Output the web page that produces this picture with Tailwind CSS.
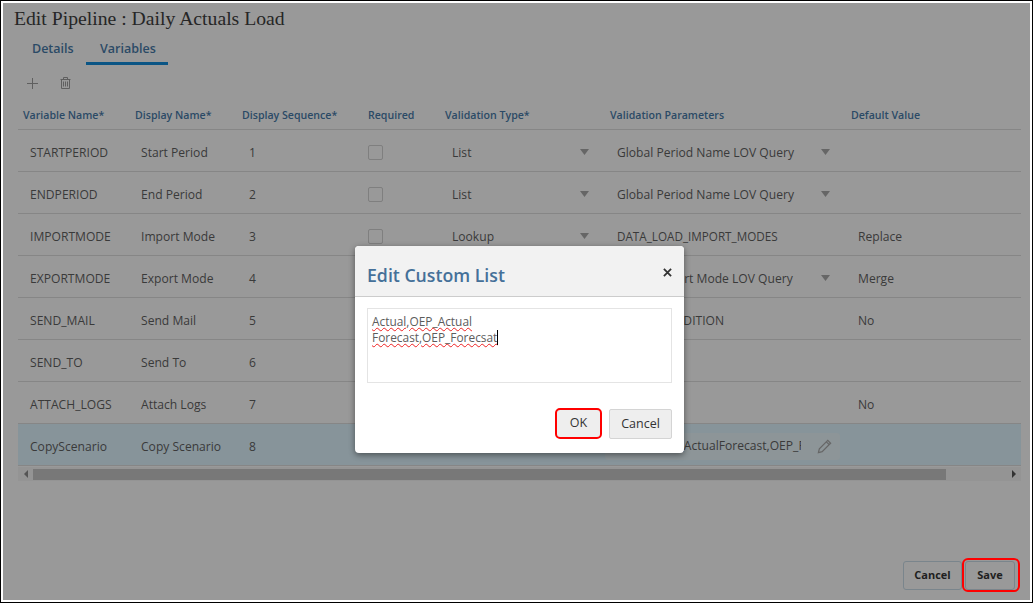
<!DOCTYPE html>
<html>
<head>
<meta charset="utf-8">
<script src="https://cdn.jsdelivr.net/npm/@tailwindcss/browser@4"></script>
</head>
<body class="w-[1033px] h-[603px] overflow-hidden bg-white font-['Open_Sans',sans-serif]">
<div class="relative w-[1033px] h-[603px] border border-black p-[2px]">
  <div class="flex flex-col h-full bg-[#999999] pl-[11px] pr-[9px]">
    <h1 class="font-['Liberation_Serif',serif] text-[#262626] text-[19.7px] leading-[24px] pt-[3px] h-[29px]">Edit Pipeline : Daily Actuals Load</h1>
    <div class="flex h-[33px] ml-[12px] text-[#2b4a66] text-[12.5px] font-semibold">
      <div class="w-[60px] pl-[6px] pt-[8px]">Details</div>
      <div class="w-[82px] pl-[14px] pt-[8px] border-b-[3px] border-[#0a5585]">Variables</div>
    </div>
    <div class="flex items-center gap-[22px] h-[36px] pl-[13px]">
      <svg class="w-[11px] h-[11px]" viewBox="0 0 11 11" fill="none" stroke="#5f5f5f" stroke-width="1"><path d="M5.5 0V11M0 5.5H11"/></svg>
      <svg class="w-[11px] h-[12px]" viewBox="0 0 11 12" fill="none" stroke="#5f5f5f" stroke-width="1"><path d="M0.5 2.5H10.5M3.5 2.5V0.5H7.5V2.5M1.5 2.5V11.5H9.5V2.5M3.5 4.5V9.5M5.5 4.5V9.5M7.5 4.5V9.5"/></svg>
    </div>
    <div class="ml-[4px] text-[12.1px] text-[#3a3a3a]">
      <div class="flex items-center h-[29px] pt-[2px] border-b border-[#868686] text-[#2b4a66] font-semibold text-[10.6px]">
        <div class="w-[112px] pl-[5px]">Variable Name*</div>
        <div class="w-[107px] pl-[5px]">Display Name*</div>
        <div class="w-[126px] pl-[5px]">Display Sequence*</div>
        <div class="w-[77px] pl-[5px]">Required</div>
        <div class="w-[165px] pl-[5px]">Validation Type*</div>
        <div class="w-[241px] pl-[5px]">Validation Parameters</div>
        <div class="flex-1 pl-[5px]">Default Value</div>
      </div>
      <div class="flex items-center h-[42px] pt-[5px] border-b border-[#868686]">
        <div class="w-[112px] pl-[12px]">STARTPERIOD</div><div class="w-[107px] pl-[11px]">Start Period</div><div class="w-[126px] pl-[12px]">1</div>
        <div class="w-[77px] pl-[5px]"><div class="w-[15px] h-[15px] -mt-[2px] border border-[#7f7f7f] rounded-[2px]"></div></div>
        <div class="w-[165px] pl-[12px] pr-[16px] flex justify-between items-center"><span>List</span><svg class="w-[9px] h-[6px] -mt-[2px]" viewBox="0 0 9 6"><path d="M0 0H9L4.5 6Z" fill="#666"/></svg></div>
        <div class="w-[241px] pl-[12px] flex items-center"><span class="w-[204px]">Global Period Name LOV Query</span><svg class="w-[9px] h-[6px] -mt-[2px]" viewBox="0 0 9 6"><path d="M0 0H9L4.5 6Z" fill="#666"/></svg></div>
      </div>
      <div class="flex items-center h-[42px] pt-[5px] border-b border-[#868686]">
        <div class="w-[112px] pl-[12px]">ENDPERIOD</div><div class="w-[107px] pl-[11px]">End Period</div><div class="w-[126px] pl-[12px]">2</div>
        <div class="w-[77px] pl-[5px]"><div class="w-[15px] h-[15px] -mt-[2px] border border-[#7f7f7f] rounded-[2px]"></div></div>
        <div class="w-[165px] pl-[12px] pr-[16px] flex justify-between items-center"><span>List</span><svg class="w-[9px] h-[6px] -mt-[2px]" viewBox="0 0 9 6"><path d="M0 0H9L4.5 6Z" fill="#666"/></svg></div>
        <div class="w-[241px] pl-[12px] flex items-center"><span class="w-[204px]">Global Period Name LOV Query</span><svg class="w-[9px] h-[6px] -mt-[2px]" viewBox="0 0 9 6"><path d="M0 0H9L4.5 6Z" fill="#666"/></svg></div>
      </div>
      <div class="flex items-center h-[42px] pt-[5px] border-b border-[#868686]">
        <div class="w-[112px] pl-[12px]">IMPORTMODE</div><div class="w-[107px] pl-[11px]">Import Mode</div><div class="w-[126px] pl-[12px]">3</div>
        <div class="w-[77px] pl-[5px]"><div class="w-[15px] h-[15px] -mt-[2px] border border-[#7f7f7f] rounded-[2px]"></div></div>
        <div class="w-[165px] pl-[12px] pr-[16px] flex justify-between items-center"><span>Lookup</span><svg class="w-[9px] h-[6px] -mt-[2px]" viewBox="0 0 9 6"><path d="M0 0H9L4.5 6Z" fill="#666"/></svg></div>
        <div class="w-[241px] pl-[12px] whitespace-nowrap text-[11.7px]">DATA_LOAD_IMPORT_MODES</div><div class="pl-[12px]">Replace</div>
      </div>
      <div class="flex items-center h-[42px] pt-[5px] border-b border-[#868686]">
        <div class="w-[112px] pl-[12px]">EXPORTMODE</div><div class="w-[107px] pl-[11px]">Export Mode</div><div class="w-[126px] pl-[12px]">4</div>
        <div class="w-[77px]"></div><div class="w-[165px]"></div>
        <div class="w-[241px] pl-[12px] flex items-center"><span class="w-[204px]">Global Export Mode LOV Query</span><svg class="w-[9px] h-[6px] -mt-[2px]" viewBox="0 0 9 6"><path d="M0 0H9L4.5 6Z" fill="#666"/></svg></div><div class="pl-[12px]">Merge</div>
      </div>
      <div class="flex items-center h-[42px] pt-[5px] border-b border-[#868686]">
        <div class="w-[112px] pl-[12px]">SEND_MAIL</div><div class="w-[107px] pl-[11px]">Send Mail</div><div class="w-[126px] pl-[12px]">5</div>
        <div class="w-[77px]"></div><div class="w-[165px]"></div>
        <div class="w-[241px] pl-[12px]">EMAIL_CONDITION</div><div class="pl-[12px]">No</div>
      </div>
      <div class="flex items-center h-[42px] pt-[5px] border-b border-[#868686]">
        <div class="w-[112px] pl-[12px]">SEND_TO</div><div class="w-[107px] pl-[11px]">Send To</div><div class="w-[126px] pl-[12px]">6</div>
      </div>
      <div class="flex items-center h-[42px] pt-[5px] border-b border-[#868686]">
        <div class="w-[112px] pl-[12px]">ATTACH_LOGS</div><div class="w-[107px] pl-[11px]">Attach Logs</div><div class="w-[126px] pl-[12px]">7</div>
        <div class="w-[77px]"></div><div class="w-[165px]"></div><div class="w-[241px]"></div><div class="pl-[12px]">No</div>
      </div>
      <div class="flex items-center h-[42px] pt-[3px] border-b border-[#868686] bg-[#87949a]">
        <div class="w-[112px] pl-[12px] pt-[2px]">CopyScenario</div><div class="w-[107px] pl-[11px] pt-[2px]">Copy Scenario</div><div class="w-[126px] pl-[12px] pt-[2px]">8</div>
        <div class="w-[77px]"></div><div class="w-[165px]"></div>
        <div class="w-[235px] h-[27px] pl-[12px] pt-[1px] flex items-center bg-[#8d9598] rounded-[3px]"><span class="w-[184px] overflow-hidden whitespace-nowrap">Actual,OEP_ActualForecast,OEP_Forecast</span><svg class="w-[15px] h-[15px] ml-[16px]" viewBox="0 0 16 16" fill="none" stroke="#666" stroke-width="1.3"><path d="M1.5 14.5L2.5 10.5L11.5 1.5L14.5 4.5L5.5 13.5ZM10 3L13 6"/></svg></div>
      </div>
      <div class="flex items-center h-[14px] mt-[1px] bg-[#949494]">
        <div class="w-[15px] flex justify-center"><div class="border-y-[4px] border-r-[4px] border-y-transparent border-r-[#555]"></div></div>
        <div class="w-[913px] h-[11px] bg-[#787878]"></div>
        <div class="flex-1 flex justify-end pr-[5px]"><div class="border-y-[4px] border-l-[4px] border-y-transparent border-l-[#333]"></div></div>
      </div>
    </div>
    <div class="flex justify-end gap-[3px] mt-auto mb-[10px] pr-[6px] text-[11px] font-bold text-[#1f1f1f]">
      <div class="w-[59px] h-[29px] flex items-center justify-center border border-[#7a858c] rounded-[3px]">Cancel</div>
      <div class="w-[50px] h-[29px] flex items-center justify-center border border-[#7a858c] rounded-[3px]">Save</div>
    </div>
  </div>
  <div class="absolute left-[961px] top-[557px] w-[58px] h-[34px] border-2 border-[#ff0000] rounded-[6px]"></div>
  <div class="absolute left-[354px] top-[245px] w-[329px] h-[207px] bg-white rounded-[4px] shadow-[0_2px_6px_rgba(0,0,0,0.45)] flex flex-col">
    <div class="flex items-center justify-between h-[51px] bg-[#f2f2f2] border-b border-[#cccccc] rounded-t-[4px] pl-[12px] pr-[12px]">
      <span class="text-[#457099] text-[17.7px] font-semibold pt-[8px]">Edit Custom List</span>
      <svg class="w-[9px] h-[9px] mt-[2px]" viewBox="0 0 10 10" stroke="#333" stroke-width="2"><path d="M1 1L9 9M9 1L1 9"/></svg>
    </div>
    <div class="mx-[12px] mt-[11px] h-[75px] border border-[#e4e4e4] px-[4px] pt-[4px] text-[11.9px] leading-[16px] text-[#5c5c5c]">
      <div><span class="underline decoration-wavy decoration-[#ee2222] decoration-1">Actual,OEP_Actual</span></div>
      <div class="flex items-center"><span class="underline decoration-wavy decoration-[#ee2222] decoration-1">Forecast,OEP_Forecsat</span><span class="w-px h-[15px] bg-black"></span></div>
    </div>
    <div class="flex justify-end items-center gap-[7px] mt-[25px] mr-[12px] text-[12.5px] text-[#333]">
      <div class="w-[47px] h-[31px] flex items-center justify-center bg-[#eeeeee] border-2 border-[#ff0000] rounded-[5px]">OK</div>
      <div class="w-[63px] h-[30px] pt-[1px] flex items-center justify-center bg-[#eeeeee] border border-[#d4d4d4] rounded-[2px]">Cancel</div>
    </div>
  </div>
</div>
</body>
</html>
